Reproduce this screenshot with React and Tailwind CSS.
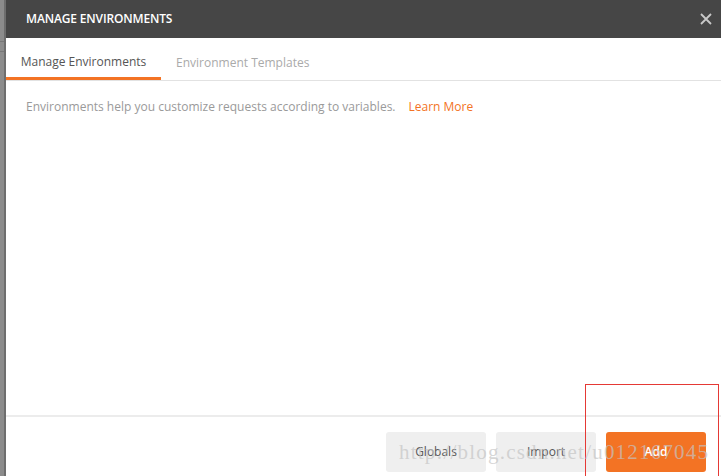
import React from "react";

export default function App() {
  return (
    <div className="relative flex h-[476px] w-[721px] overflow-hidden bg-white" style={{ fontFamily: '"Open Sans", "Noto Sans", sans-serif' }}>
      <div className="flex w-[6px] shrink-0">
        <div className="flex w-[4px] flex-col bg-[#8c8c8c]">
          <div className="h-[42px] border-b border-[#777]" />
          <div className="h-[10px] border-b border-[#777]" />
        </div>
        <div className="w-[2px] bg-[#6e6e6e]" />
      </div>
      <div className="flex flex-1 flex-col">
        <div className="flex h-[38px] items-center justify-between bg-[#464646] pl-[20px] pr-[9px]">
          <span className="text-[12px] font-semibold tracking-[-0.15px] text-white">MANAGE ENVIRONMENTS</span>
          <svg width="12" height="12" viewBox="0 0 12 12" className="mb-[1px]">
            <path d="M1 1 L11 11 M11 1 L1 11" stroke="#c8c8c8" strokeWidth="1.8" />
          </svg>
        </div>
        <div className="flex h-[43px] items-stretch border-b border-[#e2e2e2]">
          <div className="flex w-[155px] items-center justify-center border-b-[3px] border-[#f37324] pt-[8px] text-[12px] text-[#555]">
            Manage Environments
          </div>
          <div className="flex items-center pl-[15px] pt-[7px] text-[12px] text-[#aaa]">Environment Templates</div>
        </div>
        <div className="flex h-[50px] items-center pl-[20px] pt-[1px] text-[12px]">
          <span className="text-[#9a9a9a]">Environments help you customize requests according to variables.</span>
          <span className="ml-[13px] text-[#f37324]">Learn More</span>
        </div>
        <div className="flex-1" />
        <div className="h-[61px] border-t-[2px] border-[#ececec] pr-[15px] pt-[15px]">
          <div className="flex justify-end gap-[10px]">
            <button className="h-[40px] w-[100px] rounded-[3px] bg-[#efefef] text-[12px] text-[#555]">Globals</button>
            <button className="h-[40px] w-[100px] rounded-[3px] bg-[#efefef] text-[12px] text-[#555]">Import</button>
            <button className="h-[40px] w-[100px] rounded-[3px] bg-[#f37324] text-[12px] font-semibold text-white">Add</button>
          </div>
        </div>
      </div>
      <div className="pointer-events-none absolute left-[585px] top-[384px] h-[100px] w-[134px] border border-[#e53935]" />
      <div
        className="pointer-events-none absolute left-[399px] top-[442px] text-[21px] leading-none tracking-[1.2px] text-[#c4c4c4]/70"
        style={{ fontFamily: '"Liberation Serif", serif' }}
      >
        http://blog.csdn.net/u012167045
      </div>
    </div>
  );
}
